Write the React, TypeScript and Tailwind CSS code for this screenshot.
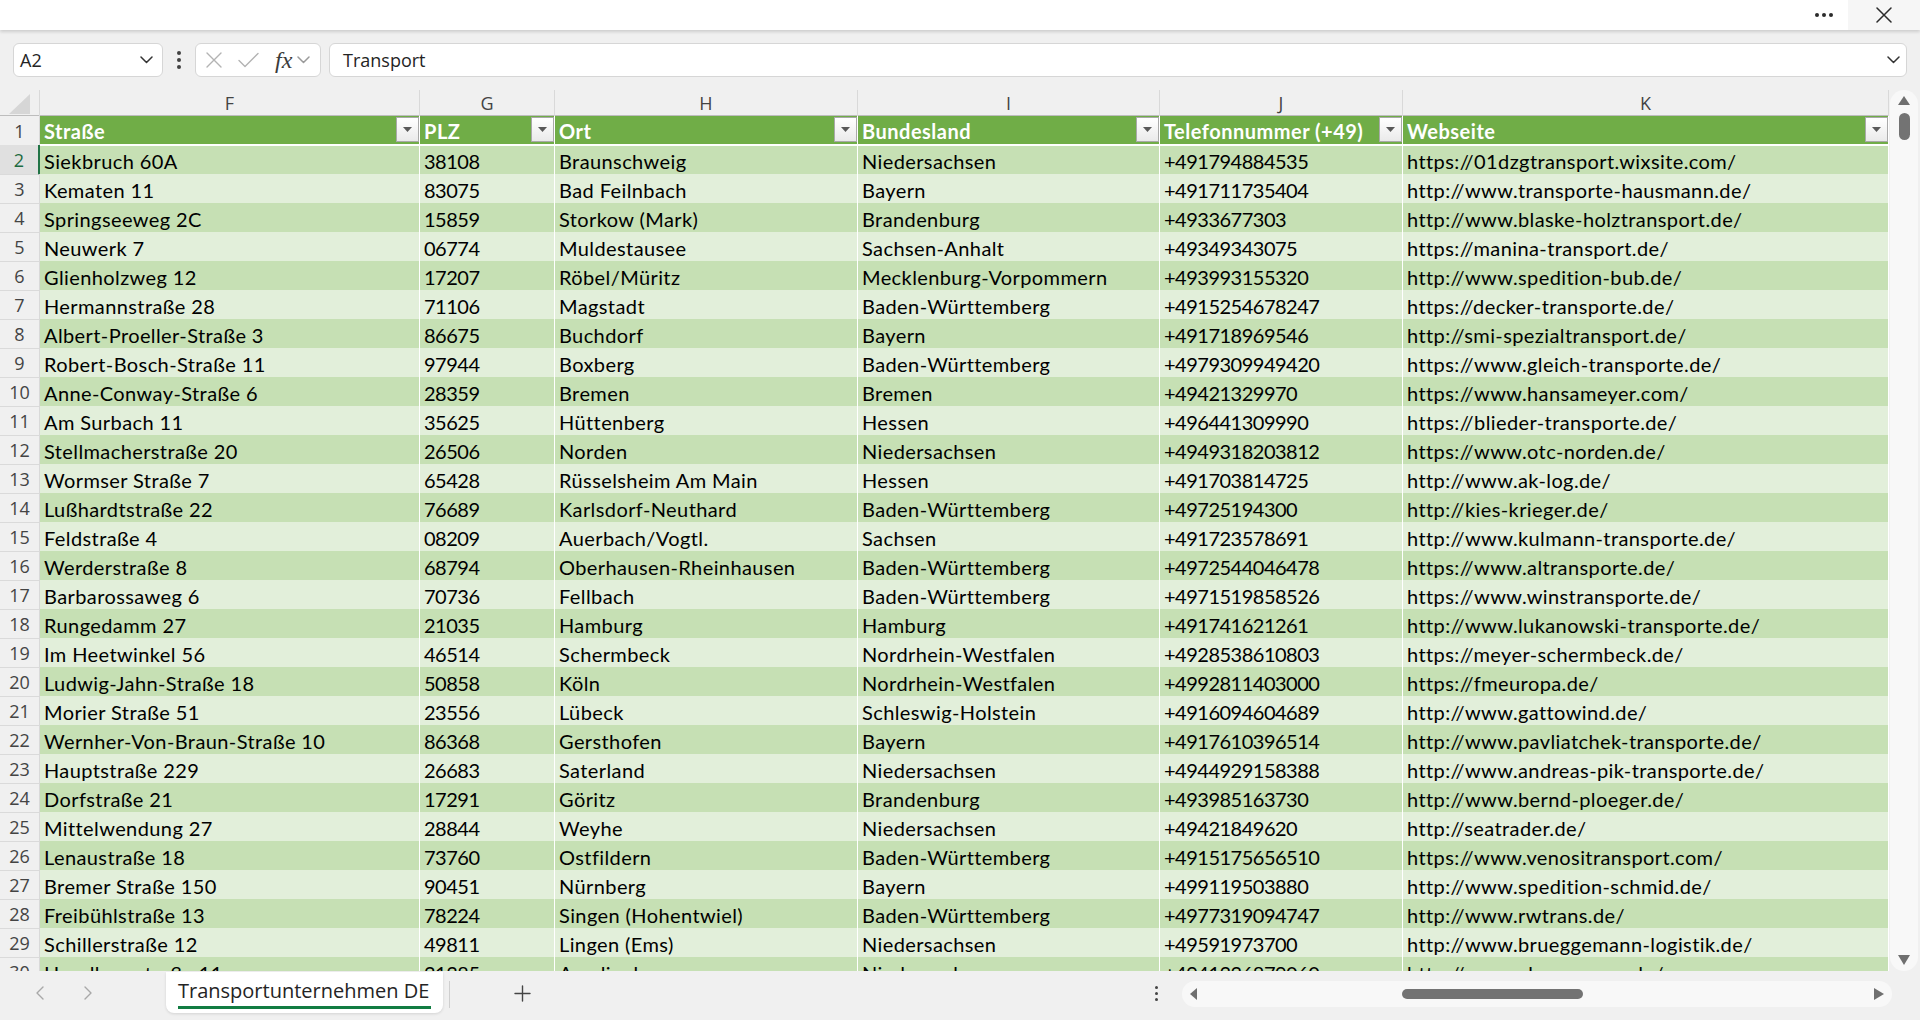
import React from "react";

type Row = [string, string, string, string, string, string];

const rows: Row[] = [
  ["Siekbruch 60A", "38108", "Braunschweig", "Niedersachsen", "+491794884535", "https://01dzgtransport.wixsite.com/"],
  ["Kematen 11", "83075", "Bad Feilnbach", "Bayern", "+491711735404", "http://www.transporte-hausmann.de/"],
  ["Springseeweg 2C", "15859", "Storkow (Mark)", "Brandenburg", "+4933677303", "http://www.blaske-holztransport.de/"],
  ["Neuwerk 7", "06774", "Muldestausee", "Sachsen-Anhalt", "+49349343075", "https://manina-transport.de/"],
  ["Glienholzweg 12", "17207", "Röbel/Müritz", "Mecklenburg-Vorpommern", "+493993155320", "http://www.spedition-bub.de/"],
  ["Hermannstraße 28", "71106", "Magstadt", "Baden-Württemberg", "+4915254678247", "https://decker-transporte.de/"],
  ["Albert-Proeller-Straße 3", "86675", "Buchdorf", "Bayern", "+491718969546", "http://smi-spezialtransport.de/"],
  ["Robert-Bosch-Straße 11", "97944", "Boxberg", "Baden-Württemberg", "+4979309949420", "https://www.gleich-transporte.de/"],
  ["Anne-Conway-Straße 6", "28359", "Bremen", "Bremen", "+49421329970", "https://www.hansameyer.com/"],
  ["Am Surbach 11", "35625", "Hüttenberg", "Hessen", "+496441309990", "https://blieder-transporte.de/"],
  ["Stellmacherstraße 20", "26506", "Norden", "Niedersachsen", "+4949318203812", "https://www.otc-norden.de/"],
  ["Wormser Straße 7", "65428", "Rüsselsheim Am Main", "Hessen", "+491703814725", "http://www.ak-log.de/"],
  ["Lußhardtstraße 22", "76689", "Karlsdorf-Neuthard", "Baden-Württemberg", "+49725194300", "http://kies-krieger.de/"],
  ["Feldstraße 4", "08209", "Auerbach/Vogtl.", "Sachsen", "+491723578691", "http://www.kulmann-transporte.de/"],
  ["Werderstraße 8", "68794", "Oberhausen-Rheinhausen", "Baden-Württemberg", "+4972544046478", "https://www.altransporte.de/"],
  ["Barbarossaweg 6", "70736", "Fellbach", "Baden-Württemberg", "+4971519858526", "https://www.winstransporte.de/"],
  ["Rungedamm 27", "21035", "Hamburg", "Hamburg", "+491741621261", "http://www.lukanowski-transporte.de/"],
  ["Im Heetwinkel 56", "46514", "Schermbeck", "Nordrhein-Westfalen", "+4928538610803", "https://meyer-schermbeck.de/"],
  ["Ludwig-Jahn-Straße 18", "50858", "Köln", "Nordrhein-Westfalen", "+4992811403000", "https://fmeuropa.de/"],
  ["Morier Straße 51", "23556", "Lübeck", "Schleswig-Holstein", "+4916094604689", "http://www.gattowind.de/"],
  ["Wernher-Von-Braun-Straße 10", "86368", "Gersthofen", "Bayern", "+4917610396514", "http://www.pavliatchek-transporte.de/"],
  ["Hauptstraße 229", "26683", "Saterland", "Niedersachsen", "+4944929158388", "http://www.andreas-pik-transporte.de/"],
  ["Dorfstraße 21", "17291", "Göritz", "Brandenburg", "+493985163730", "http://www.bernd-ploeger.de/"],
  ["Mittelwendung 27", "28844", "Weyhe", "Niedersachsen", "+49421849620", "http://seatrader.de/"],
  ["Lenaustraße 18", "73760", "Ostfildern", "Baden-Württemberg", "+4915175656510", "https://www.venositransport.com/"],
  ["Bremer Straße 150", "90451", "Nürnberg", "Bayern", "+499119503880", "http://www.spedition-schmid.de/"],
  ["Freibühlstraße 13", "78224", "Singen (Hohentwiel)", "Baden-Württemberg", "+4977319094747", "http://www.rwtrans.de/"],
  ["Schillerstraße 12", "49811", "Lingen (Ems)", "Niedersachsen", "+49591973700", "http://www.brueggemann-logistik.de/"],
  ["Haselbergstraße 11", "21385", "Amelinghausen", "Niedersachsen", "+4941326879060", "http://www.abc-express.de/"],
];

const letters = ["F", "G", "H", "I", "J", "K"];
const headers = ["Straße", "PLZ", "Ort", "Bundesland", "Telefonnummer (+49)", "Webseite"];
// PLZ and phone columns hold only digits
const numeric = [false, true, false, false, true, false];

const UI = { fontFamily: '"Open Sans", "Noto Sans", sans-serif' };
const CELL = { fontFamily: 'Lato, "Open Sans", sans-serif' };

const gridCols = "grid grid-cols-[40px_380px_135px_303px_302px_243px_486px]";

function Chevron({ className = "", color = "#333" }: { className?: string; color?: string }) {
  return (
    <svg className={className} width="13" height="8" viewBox="0 0 13 8" fill="none">
      <path d="M1 1l5.5 5.5L12 1" stroke={color} strokeWidth="1.5" strokeLinecap="round" strokeLinejoin="round" />
    </svg>
  );
}

function FilterButton() {
  return (
    <div className="absolute right-0 top-[1px] flex h-[25px] w-[23px] items-center justify-center border border-[#a9a9a9] bg-linear-to-b from-white to-[#eaeaea]">
      <svg width="9" height="5" viewBox="0 0 9 5">
        <path d="M0 0h9L4.5 5z" fill="#595959" />
      </svg>
    </div>
  );
}

function TitleStrip() {
  return (
    <div className="relative z-10 flex h-[30px] shrink-0 items-stretch justify-end bg-white shadow-[0_2px_3px_rgba(0,0,0,0.14)]">
      <div className="flex w-[48px] items-center justify-center gap-[3px]">
        <span className="h-[4px] w-[4px] rounded-full bg-[#2b2b2b]" />
        <span className="h-[4px] w-[4px] rounded-full bg-[#2b2b2b]" />
        <span className="h-[4px] w-[4px] rounded-full bg-[#2b2b2b]" />
      </div>
      <div className="flex w-[72px] items-center justify-center bg-[#f6f6f6]">
        <svg width="16" height="16" viewBox="0 0 16 16" fill="none">
          <path d="M1 1l14 14M15 1L1 15" stroke="#2b2b2b" strokeWidth="1.5" strokeLinecap="round" />
        </svg>
      </div>
    </div>
  );
}

function FormulaBar() {
  return (
    <div className="flex h-[60px] shrink-0 items-center px-[13px]" style={UI}>
      <div className="flex h-[34px] w-[150px] items-center justify-between rounded-[6px] border border-[#d6d6d6] bg-white pl-[6px] pr-[9px]">
        <span className="pt-[1px] text-[18px] text-[#242424]">A2</span>
        <Chevron />
      </div>
      <div className="flex h-[34px] w-[32px] flex-col items-center justify-center gap-[3px]">
        <span className="h-[4px] w-[4px] rounded-full bg-[#424242]" />
        <span className="h-[4px] w-[4px] rounded-full bg-[#424242]" />
        <span className="h-[4px] w-[4px] rounded-full bg-[#424242]" />
      </div>
      <div className="flex h-[34px] w-[126px] items-center rounded-[6px] border border-[#d6d6d6] bg-white pl-[10px]">
        <svg width="16" height="16" viewBox="0 0 16 16" fill="none">
          <path d="M1 1l14 14M15 1L1 15" stroke="#b3b3b3" strokeWidth="1.4" strokeLinecap="round" />
        </svg>
        <svg className="ml-[16px]" width="21" height="16" viewBox="0 0 21 16" fill="none">
          <path d="M1 8.5l6 6L20 1.5" stroke="#b3b3b3" strokeWidth="1.4" strokeLinecap="round" strokeLinejoin="round" />
        </svg>
        <span
          className="ml-[16px] text-[24px] italic leading-none text-[#3b3b3b]"
          style={{ fontFamily: '"Liberation Serif", "DejaVu Serif", serif' }}
        >
          fx
        </span>
        <Chevron className="ml-[5px]" color="#9a9a9a" />
      </div>
      <div className="ml-[8px] flex h-[34px] flex-1 items-center justify-between rounded-[6px] border border-[#d6d6d6] bg-white pl-[13px] pr-[6px]">
        <span className="pt-[1px] text-[18px] text-[#242424]">Transport</span>
        <Chevron />
      </div>
    </div>
  );
}

function SheetGrid() {
  return (
    <div className="w-[1889px] overflow-hidden" style={CELL}>
      {/* column letters */}
      <div className={`${gridCols} h-[26px] border-b border-[#bdbdbd]`} style={UI}>
        <div className="flex items-center justify-center border-r border-[#d9d9d9]">
          <svg width="22" height="20" viewBox="0 0 22 20">
            <path d="M21 0v20H0z" fill="#d6d6d6" />
          </svg>
        </div>
        {letters.map((l) => (
          <div key={l} className="flex items-center justify-center border-r border-[#d9d9d9] text-[18px] text-[#444]">
            {l}
          </div>
        ))}
      </div>

      {/* table header row */}
      <div className={`${gridCols} h-[29px]`}>
        <div className="flex items-center justify-center border-b border-r border-[#d9d9d9] pt-[2px] text-[18px] text-[#444]" style={UI}>
          1
        </div>
        {headers.map((h) => (
          <div key={h} className="relative flex items-center border-b-2 border-r border-white bg-[#70ad47] pl-[4px]">
            <span className="pt-[2px] text-[20px] font-bold leading-none tracking-[0.5px] text-white">{h}</span>
            <FilterButton />
          </div>
        ))}
      </div>

      {/* data rows */}
      {rows.map((r, i) => {
        const n = i + 2;
        const dark = n % 2 === 0;
        const bg = dark ? "bg-[#c6e0b4]" : "bg-[#e2efda]";
        const active = n === 2;
        return (
          <div key={n} className={`${gridCols} h-[29px]`}>
            <div
              className={`flex items-center justify-center border-b border-[#dadada] pt-[2px] text-[18px] ${
                active ? "border-r-2 border-r-[#217346] bg-[#e0e0e0] text-[#1d6b40]" : "border-r border-r-[#d9d9d9] text-[#444]"
              }`}
              style={UI}
            >
              {n}
            </div>
            {r.map((v, j) => (
              <div key={j} className={`flex items-center overflow-hidden whitespace-nowrap border-b border-r border-white pl-[4px] pt-[2px] ${bg}`}>
                <span
                  className={
                    numeric[j]
                      ? "text-[20px] leading-[20px] tracking-[-0.5px] text-black"
                      : "text-[20px] leading-[20px] tracking-[0.4px] text-black"
                  }
                >
                  {v}
                </span>
              </div>
            ))}
          </div>
        );
      })}
    </div>
  );
}

function VerticalScroll() {
  return (
    <div className="flex w-[31px] justify-end pr-[2px]">
      <div className="flex h-full w-[28px] flex-col items-center rounded-[14px] bg-[#f8f8f8] py-[6px]">
        <svg width="12" height="9" viewBox="0 0 12 9">
          <path d="M6 0l6 9H0z" fill="#6f6f6f" />
        </svg>
        <div className="mt-[8px] h-[27px] w-[11px] rounded-full bg-[#737373]" />
        <div className="flex-1" />
        <svg width="12" height="10" viewBox="0 0 12 10">
          <path d="M0 0h12L6 10z" fill="#6f6f6f" />
        </svg>
      </div>
    </div>
  );
}

function SheetTabs() {
  return (
    <div className="flex h-[49px] shrink-0 items-start" style={UI}>
      <div className="flex h-[44px] items-center pl-[28px]">
        <div className="flex w-[24px] justify-center">
          <svg width="8" height="14" viewBox="0 0 8 14" fill="none">
            <path d="M7 1L1 7l6 6" stroke="#a8a8a8" strokeWidth="1.4" strokeLinecap="round" strokeLinejoin="round" />
          </svg>
        </div>
        <div className="ml-[24px] flex w-[24px] justify-center">
          <svg width="8" height="14" viewBox="0 0 8 14" fill="none">
            <path d="M1 1l6 6-6 6" stroke="#a8a8a8" strokeWidth="1.4" strokeLinecap="round" strokeLinejoin="round" />
          </svg>
        </div>
      </div>
      <div className="ml-[66px] mt-[1px] flex h-[41px] w-[277px] flex-col rounded-b-[8px] bg-white pl-[12px] shadow-[0_1px_3px_rgba(0,0,0,0.12)]">
        <span className="mt-[7px] w-fit whitespace-nowrap text-[20px] leading-[24px] text-[#242424]">Transportunternehmen DE</span>
        <div className="mt-[3px] h-[3px] w-[253px] bg-[#117c42]" />
      </div>
      <div className="ml-[6px] mt-[10px] h-[27px] w-px bg-[#cfcfcf]" />
      <div className="ml-[57px] flex h-[44px] w-[30px] items-center justify-center">
        <svg width="17" height="17" viewBox="0 0 17 17" fill="none">
          <path d="M8.5 1v15M1 8.5h15" stroke="#444" strokeWidth="1.4" strokeLinecap="round" />
        </svg>
      </div>
      <div className="flex-1" />
      <div className="flex h-[44px] w-[16px] flex-col items-center justify-center gap-[3px]">
        <span className="h-[3px] w-[3px] rounded-full bg-[#444]" />
        <span className="h-[3px] w-[3px] rounded-full bg-[#444]" />
        <span className="h-[3px] w-[3px] rounded-full bg-[#444]" />
      </div>
      <div className="ml-[18px] mr-[28px] mt-[10px] flex h-[26px] w-[710px] items-center rounded-[13px] bg-[#f8f8f8] pl-[8px] pr-[8px]">
        <svg width="7" height="12" viewBox="0 0 7 12">
          <path d="M7 0v12L0 6z" fill="#6f6f6f" />
        </svg>
        <div className="ml-[205px] h-[10px] w-[181px] rounded-full bg-[#737373]" />
        <div className="flex-1" />
        <svg width="10" height="12" viewBox="0 0 10 12">
          <path d="M0 0l10 6-10 6z" fill="#6f6f6f" />
        </svg>
      </div>
    </div>
  );
}

export default function App() {
  return (
    <div className="flex h-[1020px] w-[1920px] flex-col overflow-hidden bg-[#f0f0f0]">
      <TitleStrip />
      <FormulaBar />
      <div className="flex h-[881px] shrink-0 overflow-hidden">
        <SheetGrid />
        <VerticalScroll />
      </div>
      <SheetTabs />
    </div>
  );
}
